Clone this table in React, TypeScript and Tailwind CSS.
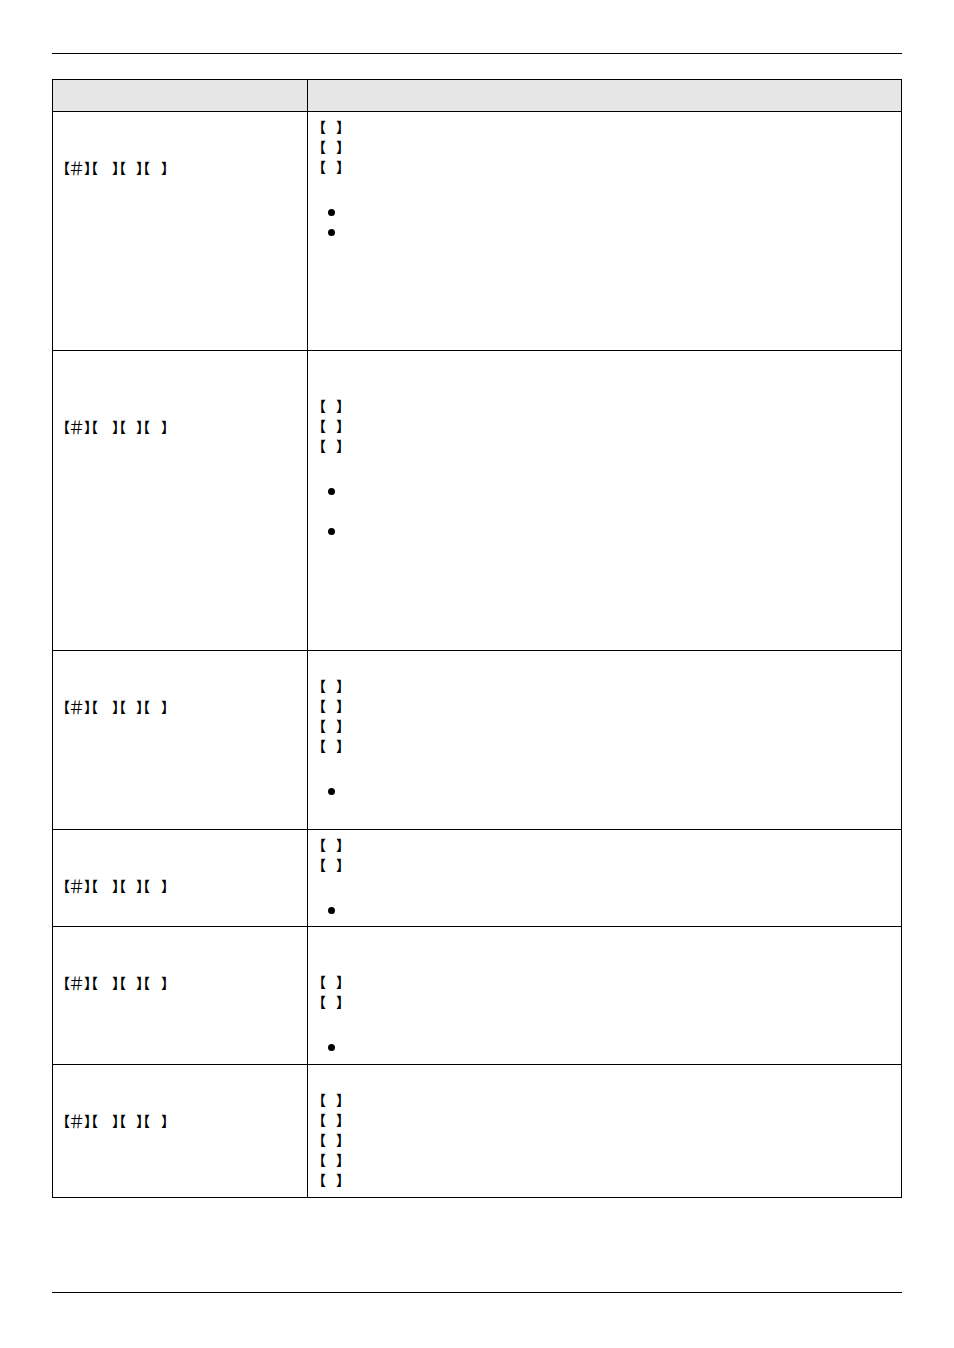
import React from "react";

const cjk = "font-['Noto_Sans_CJK_JP','Noto_Sans_CJK_SC',sans-serif] text-[14px] font-bold leading-none";

// 【 】 pair, blank between the brackets
const Pair = () => (
  <div className={`-ml-[2px] flex h-5 items-center ${cjk}`}>
    <span className="w-[24px] shrink-0 whitespace-nowrap">【</span>
    <span className="shrink-0 whitespace-nowrap">】</span>
  </div>
);

// 【＃】【 】【 】【 】
const Code = () => (
  <div className={`flex h-5 items-center pl-[3px] ${cjk}`}>
    <span className="w-[13px] shrink-0 whitespace-nowrap">【</span>
    <span className="flex w-[15px] shrink-0 justify-center whitespace-nowrap text-[17px] font-normal">＃</span>
    <span className="w-0 shrink-0 whitespace-nowrap">】</span>
    <span className="w-[28px] shrink-0 whitespace-nowrap">【</span>
    <span className="w-0 shrink-0 whitespace-nowrap">】</span>
    <span className="w-[24px] shrink-0 whitespace-nowrap">【</span>
    <span className="w-0 shrink-0 whitespace-nowrap">】</span>
    <span className="w-[25px] shrink-0 whitespace-nowrap">【</span>
    <span className="shrink-0 whitespace-nowrap">】</span>
  </div>
);

const Line = () => <div className="h-5" />;

const Bullet = ({ lines = 1 }: { lines?: number }) => (
  <div className={lines === 2 ? "h-10 pl-[14px]" : "h-5 pl-[14px]"}>
    <div className="flex h-5 items-center">
      <span className="h-[7px] w-[7px] rounded-full bg-black" />
    </div>
  </div>
);

type Row = {
  h: string;
  codeAt: number;
  before: number;
  brackets: number;
  bullets: number[];
};

const rows: Row[] = [
  { h: "h-[239px]", codeAt: 2, before: 0, brackets: 3, bullets: [1, 1] },
  { h: "h-[300px]", codeAt: 3, before: 2, brackets: 3, bullets: [2, 1] },
  { h: "h-[179px]", codeAt: 2, before: 1, brackets: 4, bullets: [1] },
  { h: "h-[97px]", codeAt: 2, before: 0, brackets: 2, bullets: [1] },
  { h: "h-[138px]", codeAt: 2, before: 2, brackets: 2, bullets: [1] },
  { h: "h-[132px]", codeAt: 2, before: 1, brackets: 5, bullets: [] },
];

export default function App() {
  return (
    <div className="h-[1348px] w-[954px] bg-white px-[52px] pt-[53px] text-black antialiased font-['Liberation_Sans',Arial,sans-serif]">
      <div className="border-t border-black" />

      <div className="mt-[25px] border border-black">
        <div className="grid h-[32px] grid-cols-[255px_1fr] border-b border-black bg-[#e6e6e6]">
          <div className="border-r border-black" />
          <div />
        </div>

        {rows.map((r, i) => (
          <div
            key={i}
            className={`grid grid-cols-[255px_1fr] ${r.h} ${i < rows.length - 1 ? "border-b border-black" : ""}`}
          >
            <div className="border-r border-black pt-[5px]">
              {Array.from({ length: r.codeAt }).map((_, k) => (
                <Line key={k} />
              ))}
              <Code />
            </div>
            <div className="pl-[6px] pt-[4px]">
              {Array.from({ length: r.before }).map((_, k) => (
                <Line key={k} />
              ))}
              {Array.from({ length: r.brackets }).map((_, k) => (
                <Pair key={k} />
              ))}
              {r.bullets.length > 0 && (
                <div className="mt-[26px]">
                  {r.bullets.map((n, k) => (
                    <Bullet key={k} lines={n} />
                  ))}
                </div>
              )}
            </div>
          </div>
        ))}
      </div>

      <div className="mt-[94px] border-t border-black" />
    </div>
  );
}
